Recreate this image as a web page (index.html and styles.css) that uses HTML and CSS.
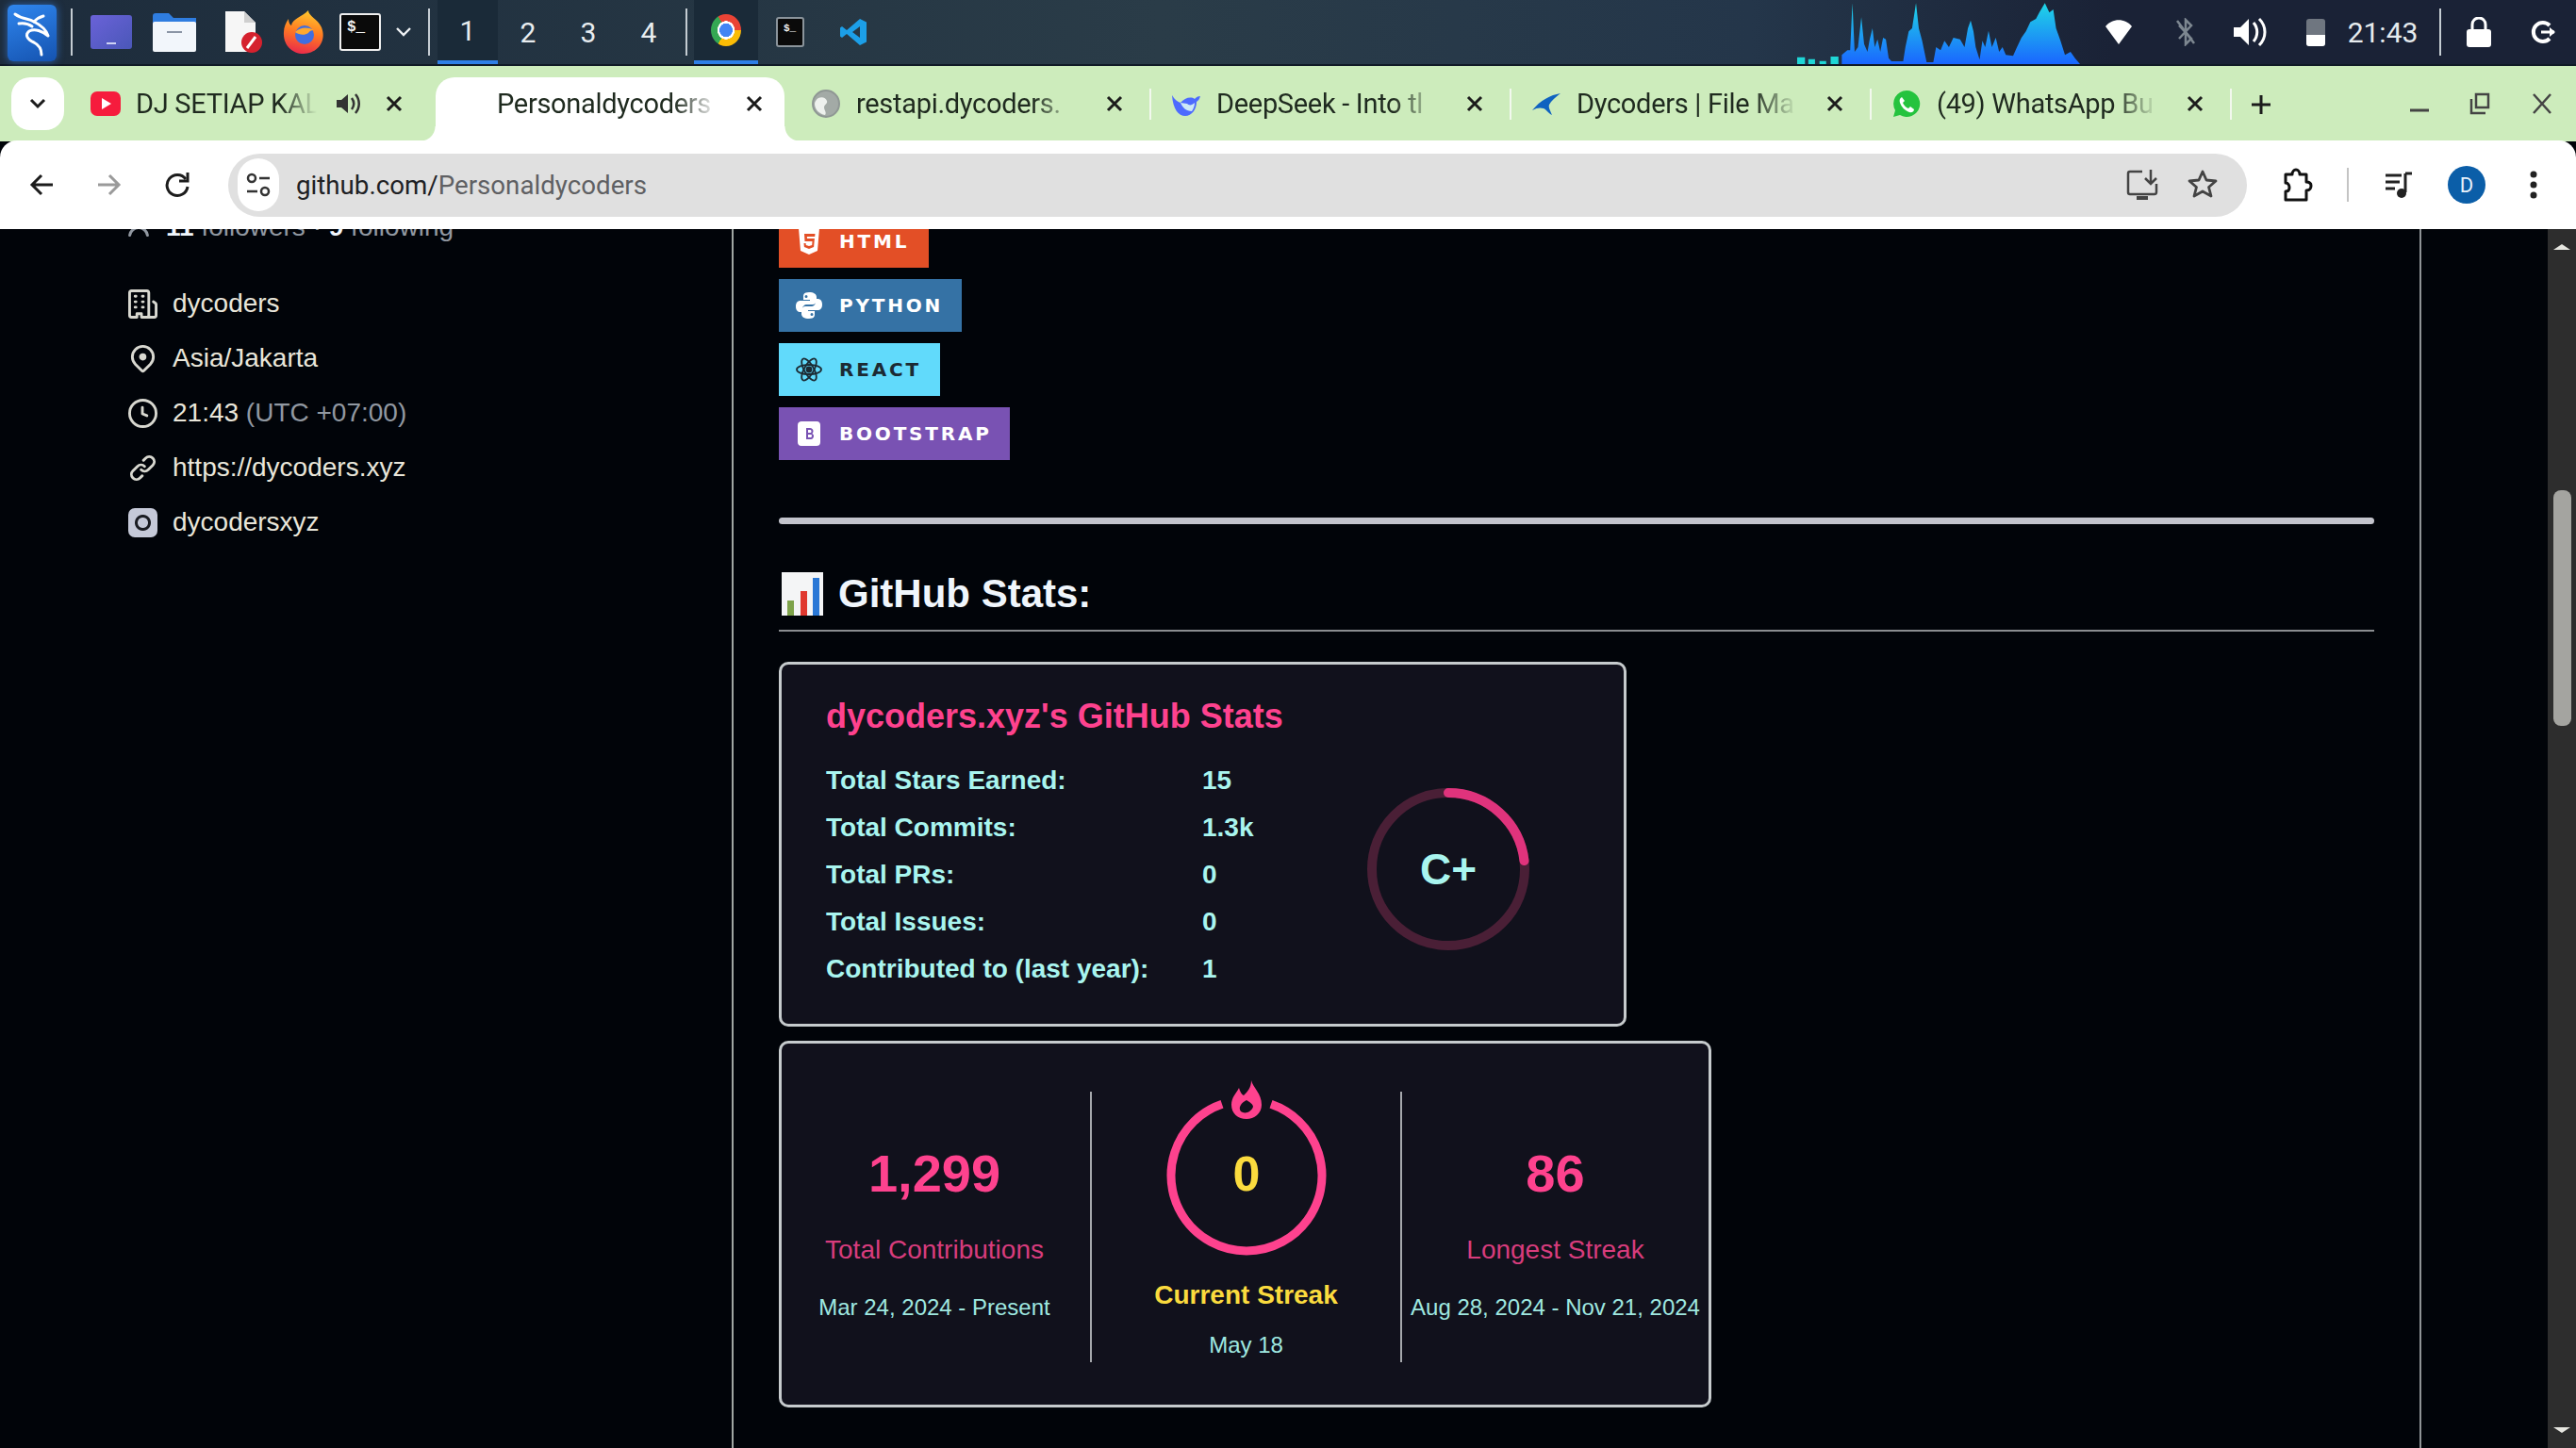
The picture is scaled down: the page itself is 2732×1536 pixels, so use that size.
FILE: index.html

```html
<!DOCTYPE html>
<html lang="en">
<head>
  <meta charset="UTF-8">
  <title>Personaldycoders</title>
  <link rel="stylesheet" href="styles.css">
</head>
<body>
  <header class="taskbar">
    <div class="tb-left">
      <div class="tb-cell kali">
        <svg width="52" height="56" viewBox="0 0 52 56" fill="none" stroke="#fff" stroke-width="3" stroke-linecap="round" stroke-linejoin="round"><path d="M8 8c8 6 14 4 20 8 6 3 13 8 15 15-6-5-14-8-20-5-5 4-2 9 5 12 6 3 8 8 8 13"/><path d="M12 18c6-1 10 0 14 3M28 16c3-3 6-5 10-6"/></svg>
      </div>
      <div class="tb-cell"><span class="tb-sep"></span></div>
      <div class="tb-cell">
        <svg width="44" height="36" viewBox="0 0 44 36"><defs><linearGradient id="desk" x1="0" y1="0" x2="1" y2="1"><stop offset="0" stop-color="#6a62d8"/><stop offset="1" stop-color="#4a57b8"/></linearGradient></defs><rect width="44" height="36" rx="3" fill="url(#desk)"/><rect x="17" y="29" width="10" height="2" fill="#cfd4f5"/></svg>
      </div>
      <div class="tb-cell">
        <svg width="46" height="42" viewBox="0 0 46 42"><path d="M0 4a3 3 0 0 1 3-3h14l5 5h24v8H0z" fill="#2f7de0"/><rect y="10" width="46" height="32" rx="2" fill="#f2f6fb"/><rect x="15" y="20" width="16" height="2" fill="#8b95a5"/></svg>
      </div>
      <div class="tb-cell">
        <svg width="42" height="46" viewBox="0 0 42 46"><path d="M2 1h20l12 12v31H2z" fill="#f6f6f6"/><path d="M22 1l12 12H22z" fill="#cfcfcf"/><circle cx="30" cy="34" r="11" fill="#d5212e"/><path d="M25 40l9-12" stroke="#fff" stroke-width="3"/></svg>
      </div>
      <div class="tb-cell">
        <svg width="44" height="46" viewBox="0 0 44 46"><defs><linearGradient id="fox" x1="0.6" y1="0" x2="0.4" y2="1"><stop offset="0" stop-color="#ffc82c"/><stop offset="0.5" stop-color="#ff7a22"/><stop offset="1" stop-color="#ea2a4a"/></linearGradient></defs><path d="M27 0c0 6 10 9 14 18 6 15-5 28-19 28C9 46 0 36 1 23c0-5 2-10 5-14 0 3 1 6 3 7 1-7 11-9 18-16z" fill="url(#fox)"/><circle cx="23" cy="26" r="10" fill="#3f6ee0"/><path d="M13 23c5-5 13-6 20-2-3 0-5 1-6 3-4 3-10 2-14-1z" fill="#ffa82e"/></svg>
      </div>
      <div class="tb-cell">
        <div class="term term-big">$_</div>
      </div>
      <div class="tb-cell">
        <svg width="18" height="12" viewBox="0 0 18 12" fill="none" stroke="#eef1f4" stroke-width="2.4"><path d="M2 2l7 7 7-7"/></svg>
      </div>
      <div class="tb-cell"><span class="tb-sep"></span></div>
      <div class="tb-cell ws active">1</div>
      <div class="tb-cell ws">2</div>
      <div class="tb-cell ws">3</div>
      <div class="tb-cell ws">4</div>
      <div class="tb-cell"><span class="tb-sep"></span></div>
      <div class="tb-cell ws active"><span class="chrome-logo"></span></div>
      <div class="tb-cell">
        <div class="term term-small">$_</div>
      </div>
      <div class="tb-cell">
        <svg width="30" height="30" viewBox="0 0 30 30"><path d="M22 1l7 3.4v21.2L22 29 8 17l-5 4-2-1.500V10.500L3 9l5 4zM22 9l-8 6 8 6z" fill="#1c9fe8"/></svg>
      </div>
    </div>
    <div class="tb-right">
      <div class="tb-graph">
        <svg width="300" height="68" viewBox="178 0 507 204" preserveAspectRatio="none">
          <defs><linearGradient id="net" x1="0" y1="0" x2="0" y2="1"><stop offset="0" stop-color="#1fd6e6"/><stop offset="1" stop-color="#1a66ff"/></linearGradient></defs>
          <path fill="#1fd6d6" d="M178 182h14v22h-14zM198 188h12v16h-12zM218 194h12v10h-12zM238 180h14v24h-14z"/>
          <polygon fill="url(#net)" points="258,204 258,175 268,160 273,160 277,10 281,165 287,150 293,55 298,140 304,165 308,125 313,90 317,150 322,125 327,165 332,120 337,125 342,185 347,195 368,195 372,150 378,100 384,90 391,10 396,90 402,130 410,198 422,198 427,150 435,160 442,130 450,150 458,120 470,125 478,150 484,90 489,65 494,100 498,150 505,190 510,130 515,150 521,98 527,150 534,120 540,165 546,150 552,175 565,178 572,150 580,120 588,100 596,70 606,60 612,40 622,10 630,40 637,30 642,90 650,130 658,175 668,165 676,185 685,204"/>
        </svg>
      </div>
      <div class="tb-cell">
        <svg width="30" height="28" viewBox="0 0 30 28"><path d="M15 27L1 8c7-9 21-9 28 0z" fill="#fff"/></svg>
      </div>
      <div class="tb-cell">
        <svg width="24" height="30" viewBox="0 0 24 30" fill="none" stroke="#7d8790" stroke-width="2.500"><path d="M5 8l13 14-6 6V2l6 6L5 22"/><path d="M3 3l18 24"/></svg>
      </div>
      <div class="tb-cell">
        <svg width="36" height="32" viewBox="0 0 36 32"><path d="M1 11h7l9-9v28l-9-9H1z" fill="#fff"/><path d="M22 6c5 6 5 14 0 20M28 2c8 8 8 20 0 28" stroke="#fff" stroke-width="3" fill="none"/></svg>
      </div>
      <div class="tb-cell">
        <svg width="20" height="30" viewBox="0 0 20 30"><rect y="1" width="20" height="29" rx="3" fill="#6f7680"/><path d="M0 18h20v9a3 3 0 0 1-3 3H3a3 3 0 0 1-3-3z" fill="#fff"/></svg>
      </div>
      <div class="tb-cell tb-clock">21:43</div>
      <div class="tb-cell"><span class="tb-sep"></span></div>
      <div class="tb-cell">
        <svg width="26" height="32" viewBox="0 0 26 32"><path d="M6 14V8a7 7 0 0 1 14 0v6" fill="none" stroke="#fff" stroke-width="3"/><rect y="13" width="26" height="19" rx="3" fill="#fff"/></svg>
      </div>
      <div></div>
      <div class="tb-cell">
        <svg width="28" height="26" viewBox="0 0 28 26" fill="none" stroke="#fff" stroke-width="4"><path d="M20 6a10 10 0 1 0 0 14"/><path d="M11 13h14" stroke-width="3"/><path d="M20 8l6 5-6 5z" fill="#fff" stroke="none"/></svg>
      </div>
    </div>
  </header>

  <div class="tabstrip">
    <button class="tab-search">
      <svg width="18" height="12" viewBox="0 0 18 12" fill="none" stroke="#1c1c1c" stroke-width="3"><path d="M2 2l7 7 7-7"/></svg>
    </button>

    <div class="tab">
      <svg class="favicon" viewBox="0 0 32 32"><rect y="3" width="32" height="26" rx="7" fill="#f61c3d"/><path d="M12 10l10 6-10 6z" fill="#fff"/></svg>
      <span class="tab-title short">DJ SETIAP KAL</span>
      <svg class="tab-audio" width="26" height="26" viewBox="0 0 26 26"><path d="M1 9h5l7-6v20l-7-6H1z" fill="#333"/><path d="M17 7c3 4 3 8 0 12M21 3c5 6 5 14 0 20" stroke="#333" stroke-width="2.500" fill="none"/></svg>
      <svg class="tab-close" width="18" height="18" viewBox="0 0 18 18"><path d="M2 2l14 14M16 2L2 16"/></svg>
    </div>

    <div class="tab active">
      <span class="tab-title">Personaldycoders</span>
      <svg class="tab-close" width="18" height="18" viewBox="0 0 18 18"><path d="M2 2l14 14M16 2L2 16"/></svg>
    </div>

    <div class="tab sep">
      <svg class="favicon" viewBox="0 0 32 32"><circle cx="16" cy="16" r="14" fill="#a3aaa6" stroke="#8f9794" stroke-width="2"/><path d="M8 10c4-2 8 0 9 3s-3 4-3 7 3 5 1 8c-6-1-11-6-11-12 0-2 2-5 4-6z" fill="#eef1ee"/></svg>
      <span class="tab-title">restapi.dycoders.</span>
      <svg class="tab-close" width="18" height="18" viewBox="0 0 18 18"><path d="M2 2l14 14M16 2L2 16"/></svg>
    </div>

    <div class="tab sep">
      <svg class="favicon" viewBox="0 0 32 32"><path d="M1 7c3 5 6 7 9 8 4-5 11-7 15-4 2-2 4-3 6-3-1 3-2 5-4 6 0 8-5 15-12 15S2 22 1 7z" fill="#4d6bfe"/><path d="M10 15c2 5 6 9 12 9 2-3 3-6 3-9-3 3-6 3-8 1-2 0-5-1-7-1z" fill="#cde9f6"/></svg>
      <span class="tab-title">DeepSeek - Into tl</span>
      <svg class="tab-close" width="18" height="18" viewBox="0 0 18 18"><path d="M2 2l14 14M16 2L2 16"/></svg>
    </div>

    <div class="tab sep">
      <svg class="favicon" viewBox="0 0 32 32"><path d="M31 5C20 7 10 12 1 23c5-3 9-3 12-2 3 1 5 5 9 7-2-5-4-8-3-11 2-4 7-8 12-12z" fill="#0f62c0"/></svg>
      <span class="tab-title">Dycoders | File Ma</span>
      <svg class="tab-close" width="18" height="18" viewBox="0 0 18 18"><path d="M2 2l14 14M16 2L2 16"/></svg>
    </div>

    <div class="tab sep">
      <svg class="favicon" viewBox="0 0 32 32"><path d="M16 2a14 14 0 0 0-12 21L2 30l7-2A14 14 0 1 0 16 2z" fill="#25c33e"/><path d="M11 9c-2 1-3 3-2 6 2 5 5 8 10 10 3 1 5-1 5-3l-4-3-2 2c-3-1-5-4-6-6l2-2z" fill="#fff"/></svg>
      <span class="tab-title">(49) WhatsApp Bu</span>
      <svg class="tab-close" width="18" height="18" viewBox="0 0 18 18"><path d="M2 2l14 14M16 2L2 16"/></svg>
    </div>

    <div class="tab-new">
      <svg width="22" height="22" viewBox="0 0 22 22"><path d="M11 1v20M1 11h20" stroke="#1c1c1c" stroke-width="3"/></svg>
    </div>

    <div class="win-controls">
      <div class="win-btn"><svg width="20" height="20" viewBox="0 0 20 20"><path d="M0 17h20" stroke="#444" stroke-width="3"/></svg></div>
      <div class="win-btn"><svg width="22" height="24" viewBox="0 0 22 24" fill="none" stroke="#444" stroke-width="2.500"><path d="M7 2h13v14H7zM2 7v15h15"/></svg></div>
      <div class="win-btn win-close"><svg width="22" height="24" viewBox="0 0 22 24"><path d="M2 2l18 20M20 2L2 22" stroke="#444" stroke-width="2.500"/></svg></div>
    </div>
  </div>

  <nav class="toolbar">
    <div class="tool">
      <svg width="26" height="24" viewBox="0 0 26 24" fill="none" stroke="#1c1c1c" stroke-width="3"><path d="M25 12H3M13 2L3 12l10 10"/></svg>
    </div>
    <div class="tool">
      <svg width="26" height="24" viewBox="0 0 26 24" fill="none" stroke="#9a9a9a" stroke-width="3"><path d="M1 12h22M13 2l10 10-10 10"/></svg>
    </div>
    <div class="tool">
      <svg width="26" height="28" viewBox="0 0 26 28" fill="none" stroke="#1c1c1c" stroke-width="3"><path d="M22 8a11 11 0 1 0 2 8"/><path d="M24 1v9h-9" stroke-width="3"/></svg>
    </div>

    <div class="omnibox">
      <div class="site-info">
        <svg width="26" height="28" viewBox="0 0 26 28" fill="none" stroke="#333" stroke-width="2.500"><circle cx="6" cy="7" r="4"/><path d="M14 7h11M1 21h11"/><circle cx="20" cy="21" r="4"/></svg>
      </div>
      <div class="url"><span class="url-host">github.com/</span>Personaldycoders</div>
      <div class="omni-actions">
        <div class="omni-btn">
          <svg width="34" height="34" viewBox="0 0 34 34" fill="none" stroke="#444" stroke-width="2.500"><path d="M17 3H4a2 2 0 0 0-2 2v20a2 2 0 0 0 2 2h26a2 2 0 0 0 2-2v-9"/><path d="M26 1v14M20 10l6 6 6-6"/><path d="M11 31h12" stroke-width="4"/></svg>
        </div>
        <div class="omni-btn">
          <svg width="32" height="32" viewBox="0 0 32 32" fill="none" stroke="#444" stroke-width="2.800" stroke-linejoin="round"><path d="M16 3l4 9 10 1-7.500 6.500L25 29l-9-5-9 5 2.500-9.500L2 13l10-1z"/></svg>
        </div>
      </div>
    </div>

    <div class="tool-right">
      <div class="tool">
        <svg width="34" height="36" viewBox="0 0 34 36" fill="none" stroke="#111" stroke-width="3" stroke-linejoin="round"><path d="M5 7h7c0-3 2-5 4-5s4 2 4 5h7v8c4 0 5 2 5 4s-1 5-5 5v10H5V25c3 0 4-2 4-4s-1-5-4-5z"/></svg>
      </div>
      <div class="tool tool-sep"><span></span></div>
      <div class="tool">
        <svg width="30" height="30" viewBox="0 0 30 30"><path d="M1 5h17M1 12h15M1 19h10" stroke="#222" stroke-width="3"/><path d="M22 3v20" stroke="#222" stroke-width="3"/><path d="M22 3h7" stroke="#222" stroke-width="3"/><circle cx="18" cy="24" r="5" fill="#222"/></svg>
      </div>
      <div class="tool"><span class="avatar">D</span></div>
      <div class="tool tool-last">
        <svg width="8" height="30" viewBox="0 0 8 30" fill="#222"><circle cx="4" cy="4" r="3.500"/><circle cx="4" cy="15" r="3.500"/><circle cx="4" cy="26" r="3.500"/></svg>
      </div>
    </div>
  </nav>

  <div class="page">
    <aside class="sidebar">
      <div class="follow-row">
        <svg class="people" width="32" height="32" viewBox="0 0 16 16" fill="#9198a1"><path d="M2 5.500a3.500 3.500 0 1 1 5.898 2.549 5.508 5.508 0 0 1 3.034 4.084.75.75 0 1 1-1.482.235 4 4 0 0 0-7.900 0 .75.750 0 0 1-1.482-.236A5.507 5.507 0 0 1 3.102 8.050 3.493 3.493 0 0 1 2 5.500Z"/></svg>
        <span><b>11</b> followers · <b>9</b> following</span>
      </div>
      <ul class="profile-list">
        <li>
          <svg viewBox="0 0 16 16"><path d="M1.750 16A1.750 1.750 0 0 1 0 14.250V1.750C0 .784.784 0 1.750 0h8.500C11.216 0 12 .784 12 1.750v12.500c0 .085-.006.168-.018.250h2.268a.25.25 0 0 0 .25-.25V8.285a.25.25 0 0 0-.111-.208l-1.055-.703a.749.749 0 1 1 .832-1.248l1.055.703c.487.325.779.871.779 1.456v5.965A1.750 1.750 0 0 1 14.250 16h-3.500a.766.766 0 0 1-.197-.026c-.099.017-.2.026-.303.026h-3a.75.75 0 0 1-.75-.75V14h-1v1.250a.75.75 0 0 1-.75.75Zm-.25-1.750c0 .138.112.25.25.25H4v-1.250a.75.75 0 0 1 .75-.75h2.500a.75.75 0 0 1 .75.75v1.250h2.250a.25.25 0 0 0 .25-.25V1.750a.25.25 0 0 0-.25-.25h-8.500a.25.25 0 0 0-.25.25ZM3.750 6h.5a.75.75 0 0 1 0 1.500h-.5a.75.75 0 0 1 0-1.500ZM3 3.750A.75.75 0 0 1 3.750 3h.5a.75.75 0 0 1 0 1.500h-.5A.75.75 0 0 1 3 3.750Zm4 3A.75.75 0 0 1 7.750 6h.5a.75.75 0 0 1 0 1.500h-.5A.75.75 0 0 1 7 6.750ZM7.750 3h.5a.75.75 0 0 1 0 1.500h-.5a.75.75 0 0 1 0-1.500ZM3 9.750A.75.75 0 0 1 3.750 9h.5a.75.75 0 0 1 0 1.500h-.5A.75.75 0 0 1 3 9.750ZM7.750 9h.5a.75.75 0 0 1 0 1.500h-.5a.75.75 0 0 1 0-1.500Z"/></svg>
          dycoders
        </li>
        <li>
          <svg viewBox="0 0 16 16"><path d="m12.596 11.596-3.535 3.536a1.500 1.500 0 0 1-2.122 0l-3.535-3.536a6.500 6.500 0 1 1 9.192-9.193 6.500 6.500 0 0 1 0 9.193Zm-1.060-8.132v-.001a5 5 0 1 0-7.072 7.072L8 14.070l3.536-3.534a5 5 0 0 0 0-7.072ZM8 9a2 2 0 1 1-.001-3.999A2 2 0 0 1 8 9Z"/></svg>
          Asia/Jakarta
        </li>
        <li>
          <svg viewBox="0 0 16 16"><path d="M8 0a8 8 0 1 1 0 16A8 8 0 0 1 8 0ZM1.500 8a6.500 6.500 0 1 0 13 0 6.500 6.500 0 0 0-13 0Zm7-3.250v2.992l2.028.812a.75.75 0 0 1-.557 1.392l-2.500-1A.751.751 0 0 1 7 8.250v-3.500a.75.75 0 0 1 1.500 0Z"/></svg>
          <span>21:43 <span class="muted">(UTC +07:00)</span></span>
        </li>
        <li>
          <svg viewBox="0 0 16 16"><path d="m7.775 3.275 1.250-1.250a3.500 3.500 0 1 1 4.950 4.950l-2.500 2.500a3.500 3.500 0 0 1-4.950 0 .751.751 0 0 1 .018-1.042.751.751 0 0 1 1.042-.018 1.998 1.998 0 0 0 2.830 0l2.500-2.500a2.002 2.002 0 0 0-2.830-2.830l-1.250 1.250a.751.751 0 0 1-1.042-.018.751.751 0 0 1-.018-1.042Zm-4.690 9.640a1.998 1.998 0 0 0 2.830 0l1.250-1.250a.751.751 0 0 1 1.042.018.751.751 0 0 1 .018 1.042l-1.250 1.250a3.500 3.500 0 1 1-4.950-4.950l2.500-2.500a3.500 3.500 0 0 1 4.950 0 .751.751 0 0 1-.018 1.042.751.751 0 0 1-1.042.018 1.998 1.998 0 0 0-2.830 0l-2.500 2.500a1.998 1.998 0 0 0 0 2.830Z"/></svg>
          https://dycoders.xyz
        </li>
        <li>
          <span class="insta"></span>
          dycodersxyz
        </li>
      </ul>
    </aside>

    <main class="readme">
      <div class="badges">
        <div class="badge badge-html">
          <svg width="28" height="28" viewBox="-3 0 28 28" fill="#fff"><path fill-rule="evenodd" d="M0 0h22l-2 24-9 4-9-4zM6 6l.5 8h8l-.3 4-3.200 1-3.200-1-.2-2H5.500l.4 4 5.100 2 5.100-2 .8-9H9l-.2-2h8.400l.3-3z"/></svg>
          HTML
        </div>
        <div class="badge badge-python">
          <svg width="28" height="28" viewBox="0 0 28 28" fill="#fff"><path d="M14 0C8 0 8 3 8 5v3h7v1H5C2 9 0 11 0 15s2 6 5 6h2v-3c0-3 2-5 5-5h6c2 0 4-2 4-4V5c0-3-3-5-8-5zm-3 3a1.500 1.500 0 1 1 0 3 1.500 1.500 0 0 1 0-3z"/><path d="M14 28c6 0 6-3 6-5v-3h-7v-1h10c3 0 5-2 5-6s-2-6-5-6h-2v3c0 3-2 5-5 5h-6c-2 0-4 2-4 4v4c0 3 3 5 8 5zm3-3a1.500 1.500 0 1 1 0-3 1.500 1.500 0 0 1 0 3z"/></svg>
          PYTHON
        </div>
        <div class="badge badge-react">
          <svg width="28" height="28" viewBox="0 0 28 28" fill="none" stroke="#1c2a33" stroke-width="1.800"><ellipse cx="14" cy="14" rx="13" ry="5"/><ellipse cx="14" cy="14" rx="13" ry="5" transform="rotate(60 14 14)"/><ellipse cx="14" cy="14" rx="13" ry="5" transform="rotate(120 14 14)"/><circle cx="14" cy="14" r="2.500" fill="#1c2a33"/></svg>
          REACT
        </div>
        <div class="badge badge-bootstrap">
          <svg width="28" height="28" viewBox="0 0 28 28"><path fill="#fff" fill-rule="evenodd" d="M6 1h16c3 0 4 2 4 4v18c0 3-2 4-4 4H6c-3 0-4-2-4-4V5c0-3 2-4 4-4zm5 7v12h5c2 0 3-2 3-3.500S18 14 17 14c1 0 1.500-1.500 1.500-3S17 8 15 8zm2 2h2c1 0 1.500.5 1.500 1.500S16 13 15 13h-2zm0 5h3c1 0 1 1 1 1.500S16.500 18 16 18h-3z"/></svg>
          BOOTSTRAP
        </div>
      </div>

      <hr class="rule">

      <h2 class="stats-heading">
        <svg width="44" height="46" viewBox="0 0 44 46"><rect width="44" height="46" fill="#f4f5f6"/><rect x="6" y="30" width="7" height="16" fill="#7ea34a"/><rect x="20" y="20" width="7" height="26" fill="#e0382f"/><rect x="33" y="6" width="7" height="40" fill="#2a78d6"/></svg>
        GitHub Stats:
      </h2>

      <section class="card stats-card">
        <h3 class="card-title">dycoders.xyz's GitHub Stats</h3>
        <div class="stats-body">
          <dl class="stats-list">
            <div class="stat-row"><dt>Total Stars Earned:</dt><dd>15</dd></div>
            <div class="stat-row"><dt>Total Commits:</dt><dd>1.3k</dd></div>
            <div class="stat-row"><dt>Total PRs:</dt><dd>0</dd></div>
            <div class="stat-row"><dt>Total Issues:</dt><dd>0</dd></div>
            <div class="stat-row"><dt>Contributed to (last year):</dt><dd>1</dd></div>
          </dl>
          <svg class="rank" width="172" height="172" viewBox="0 0 172 172">
            <circle class="rank-track" cx="86" cy="86" r="81"/>
            <circle class="rank-fill" cx="86" cy="86" r="81" stroke-dasharray="118 509" transform="rotate(-90 86 86)"/>
            <text class="rank-text" x="86" y="102" text-anchor="middle">C+</text>
          </svg>
        </div>
      </section>

      <section class="card streak-card">
        <div class="streak-col">
          <div class="streak-num">1,299</div>
          <div class="streak-label">Total Contributions</div>
          <div class="streak-date">Mar 24, 2024 - Present</div>
        </div>
        <div class="streak-col divided">
          <svg class="streak-ring" width="190" height="190" viewBox="0 0 190 190">
            <path class="ring-arc" d="M121 25.300A80 80 0 1 1 69 25.300"/>
            <path class="ring-flame" fill-rule="evenodd" d="M100 0c2 8 11 14 11 26 0 9-8 15-16 15-9 0-16-6-16-15 0-8 5-12 8-18 1 4 3 7 5 8 4-4 8-8 8-16zM95 21c-6 3-9 8-6 12 4 3 11 1 13-5 0-3-4-5-7-7z"/>
            <text class="ring-num" x="95" y="117" text-anchor="middle">0</text>
          </svg>
          <div class="streak-current">Current Streak</div>
          <div class="streak-may">May 18</div>
        </div>
        <div class="streak-col divided">
          <div class="streak-num">86</div>
          <div class="streak-label">Longest Streak</div>
          <div class="streak-date">Aug 28, 2024 - Nov 21, 2024</div>
        </div>
      </section>
    </main>

    <div class="gutter"></div>

    <div class="scrollbar">
      <span class="arrow-up"></span>
      <span class="thumb"></span>
      <span class="arrow-down"></span>
    </div>
  </div>
</body>
</html>
```

FILE: styles.css

```css
* { box-sizing: border-box; }

body {
  margin: 0;
  width: 2732px;
  height: 1536px;
  overflow: hidden;
  display: flex;
  flex-direction: column;
  font-family: "Liberation Sans", Arial, sans-serif;
  background: #010409;
}

/* desktop panel */
.taskbar {
  height: 70px;
  flex: none;
  display: flex;
  justify-content: space-between;
  background: linear-gradient(90deg, #1d2c3c 0%, #2a3c48 45%, #24364a 68%, #1a2236 82%, #1a2236 100%);
  border-bottom: 2px solid #101a26;
}
.tb-left {
  display: grid;
  grid-template-columns: 52px 32px 52px 82px 64px 64px 56px 36px 18px 64px 64px 64px 64px 16px 68px 68px 66px;
  padding-left: 8px;
}
.tb-right {
  display: grid;
  grid-template-columns: 300px 82px 60px 76px 64px 78px 44px 38px 16px 68px;
}
.tb-cell {
  display: flex;
  align-items: center;
  justify-content: center;
  height: 68px;
}
.kali {
  height: 60px;
  margin-top: 5px;
  border-radius: 6px;
  background: linear-gradient(160deg, #2f86ee, #1553b0);
  box-shadow: 0 0 8px rgba(60, 140, 255, .6);
}
.tb-sep {
  width: 2px;
  height: 50px;
  background: #c4ccd2;
}
.ws {
  color: #e8edf0;
  font: 400 30px Roboto, sans-serif;
}
.ws.active {
  background: #1a2a38;
  border-bottom: 4px solid #2f7fe6;
}
.term {
  background: #0a0a0a;
  color: #f2f2f2;
  font: 700 16px "Liberation Mono", monospace;
  padding: 4px 0 0 6px;
  border-radius: 3px;
}
.term-big {
  width: 44px;
  height: 40px;
  border: 2px solid #eee;
}
.term-small {
  width: 30px;
  height: 32px;
  font-size: 11px;
  border: 2px solid #8b949b;
}
.chrome-logo {
  width: 32px;
  height: 34px;
  border-radius: 50%;
  background:
    radial-gradient(closest-side, #4285f4 0 42%, #fff 44% 56%, transparent 58%),
    conic-gradient(from 330deg, #ea4335 0 120deg, #fbbc05 120deg 240deg, #34a853 240deg 360deg);
}
.tb-graph {
  display: flex;
  align-items: flex-end;
}
.tb-clock {
  color: #e6ebee;
  font: 400 30px Roboto, sans-serif;
}

/* tabs */
.tabstrip {
  height: 80px;
  flex: none;
  display: flex;
  padding-left: 12px;
  background: #cdecbc;
}
.tab-search {
  width: 56px;
  height: 56px;
  margin: 12px 6px 0 0;
  border: 0;
  border-radius: 20px;
  background: #fff;
  display: flex;
  align-items: center;
  justify-content: center;
  padding: 0;
}
.tab {
  position: relative;
  width: 382px;
  height: 68px;
  margin-top: 12px;
  padding: 0 29px 13px 22px;
  display: flex;
  align-items: center;
  color: #1f2a1f;
  font: 400 29px Roboto, sans-serif;
  letter-spacing: -.3px;
}
.tab.sep::after {
  content: "";
  position: absolute;
  right: -1px;
  top: 12px;
  width: 2px;
  height: 33px;
  background: #f2f8ee;
}
.tab.active {
  width: 370px;
  margin: 12px 6px 0;
  padding-left: 65px;
  padding-right: 23px;
  background: #fff;
  border-radius: 20px 20px 0 0;
}
.tab.active::before,
.tab.active::after {
  content: "";
  position: absolute;
  bottom: 0;
  width: 16px;
  height: 16px;
}
.tab.active::before {
  left: -16px;
  background: radial-gradient(circle at 0 0, transparent 15px, #fff 16px);
}
.tab.active::after {
  right: -16px;
  background: radial-gradient(circle at 100% 0, transparent 15px, #fff 16px);
}
.favicon {
  width: 32px;
  height: 32px;
  flex: none;
  margin-right: 16px;
}
.tab-title {
  width: 234px;
  flex: none;
  overflow: hidden;
  white-space: nowrap;
  -webkit-mask-image: linear-gradient(90deg, #000 80%, transparent 100%);
  mask-image: linear-gradient(90deg, #000 80%, transparent 100%);
}
.tab-title.short {
  width: 192px;
}
.tab-audio {
  margin-left: 20px;
}
.tab-close {
  flex: none;
  margin-left: auto;
}
.tab-close path {
  stroke: #1c1c1c;
  stroke-width: 3;
}
.tab-new {
  width: 64px;
  height: 68px;
  margin-top: 12px;
  padding-bottom: 11px;
  display: flex;
  align-items: center;
  justify-content: center;
}
.win-controls {
  margin-left: auto;
  display: flex;
  padding-right: 4px;
}
.win-btn {
  width: 64px;
  height: 80px;
  display: flex;
  align-items: center;
  justify-content: center;
}
.win-close {
  margin-left: 2px;
}

/* address bar */
.toolbar {
  height: 94px;
  flex: none;
  display: flex;
  align-items: center;
  padding-left: 8px;
  background: #fff;
  border-radius: 18px 18px 0 0;
  margin-top: -1px;
  position: relative;
}
.tool {
  width: 72px;
  height: 60px;
  flex: none;
  display: flex;
  align-items: center;
  justify-content: center;
}
.omnibox {
  width: 2141px;
  height: 67px;
  flex: none;
  margin-left: 18px;
  display: flex;
  align-items: center;
  padding: 0 15px 0 10px;
  border-radius: 34px;
  background: #e0e0e0;
}
.site-info {
  width: 44px;
  height: 56px;
  flex: none;
  display: flex;
  align-items: center;
  justify-content: center;
  border-radius: 28px;
  background: #fff;
}
.url {
  margin-left: 18px;
  color: #5f6063;
  font: 400 27.7px Roboto, sans-serif;
}
.url-host {
  color: #202124;
}
.omni-actions {
  margin-left: auto;
  display: flex;
}
.omni-btn {
  width: 64px;
  display: flex;
  justify-content: center;
}
.tool-right {
  display: flex;
  padding-left: 17px;
}
.tool-sep {
  width: 36px;
}
.tool-sep span {
  width: 2px;
  height: 36px;
  background: #c4c4c4;
}
.tool-last {
  width: 70px;
}
.avatar {
  width: 40px;
  height: 40px;
  border-radius: 50%;
  background: #0b5ea8;
  color: #e6f0fa;
  font: 400 22px Roboto, sans-serif;
  display: flex;
  align-items: center;
  justify-content: center;
}

/* github page */
.page {
  flex: 1;
  min-height: 0;
  display: flex;
  overflow: hidden;
}
.sidebar {
  width: 776px;
  flex: none;
  padding-left: 136px;
  color: #e9e6da;
  font-size: 28px;
}
.follow-row {
  height: 40px;
  margin-top: -22px;
  display: flex;
  align-items: center;
  gap: 8px;
  color: #9198a1;
  white-space: pre;
}
.follow-row b {
  color: #f0f6fc;
}
.profile-list {
  list-style: none;
  margin: 32px 0 0;
  padding: 0;
}
.profile-list li {
  height: 58px;
  display: flex;
  align-items: center;
  gap: 16px;
}
.profile-list svg {
  width: 31px;
  height: 31px;
  flex: none;
  fill: #d8d8d0;
}
.muted {
  color: #9198a1;
}
.insta {
  width: 31px;
  height: 31px;
  flex: none;
  border-radius: 7px;
  background: radial-gradient(circle, #c5c9d8 0 5px, #1a1c22 6px 8px, #c5c9d8 9px);
}
.readme {
  width: 1792px;
  flex: none;
  padding: 0 48px;
  border-left: 2px solid #a0a6a2;
  border-right: 2px solid #8f9496;
}
.badges {
  display: flex;
  flex-direction: column;
  align-items: flex-start;
  gap: 12px;
  margin-top: -15px;
}
.badge {
  height: 56px;
  display: flex;
  align-items: center;
  padding-left: 18px;
  gap: 18px;
  color: #fff;
  font: 700 20px "DejaVu Sans", sans-serif;
  letter-spacing: 2.8px;
}
.badge-html { width: 159px; background: #e34f26; }
.badge-python { width: 194px; background: #3572a5; }
.badge-react { width: 171px; background: #61dafb; color: #1c2a33; }
.badge-bootstrap { width: 245px; background: #7952b3; }
.rule {
  height: 7px;
  margin: 61px 0 0;
  border: 0;
  border-radius: 4px;
  background: #c3c4cc;
}
.stats-heading {
  height: 67px;
  margin: 47px 0 32px;
  padding: 0 0 11px 3px;
  display: flex;
  align-items: center;
  gap: 16px;
  color: #f0f6fc;
  font-size: 42px;
  font-weight: 700;
  border-bottom: 2px solid #8a8d90;
}
.card {
  border: 3px solid #c6cbcd;
  border-radius: 10px;
  background: #11111c;
}
.stats-card {
  width: 899px;
  height: 387px;
  padding: 33px 0 0 47px;
}
.card-title {
  margin: 0 0 21px;
  color: #fe428e;
  font-size: 36px;
  line-height: 44px;
  font-weight: 700;
}
.stats-body {
  display: flex;
  align-items: flex-start;
}
.stats-list {
  width: 574px;
  margin: 0;
}
.stat-row {
  height: 50px;
  display: flex;
  align-items: center;
  color: #a9f5ef;
  font-size: 28px;
  font-weight: 700;
}
.stat-row dt {
  width: 399px;
}
.stat-row dd {
  margin: 0;
}
.rank {
  margin-top: 33px;
  flex: none;
}
.rank-track,
.rank-fill {
  fill: none;
  stroke-width: 10;
}
.rank-track {
  stroke: #4a1f36;
}
.rank-fill {
  stroke: #e0337c;
  stroke-linecap: round;
}
.rank-text {
  fill: #a9f5ef;
  font-size: 46px;
  font-weight: 700;
}
.streak-card {
  width: 989px;
  height: 389px;
  margin-top: 15px;
  padding: 51px 0 45px;
  display: grid;
  grid-template-columns: 327px 329px 1fr;
}
.streak-col {
  display: flex;
  flex-direction: column;
  align-items: center;
  white-space: nowrap;
}
.streak-col:first-child {
  padding-right: 3px;
}
.streak-col.divided {
  border-left: 2px solid #a6a8ac;
}
.streak-num {
  margin-top: 52px;
  color: #fe428e;
  font-size: 56px;
  line-height: 70px;
  font-weight: 700;
}
.streak-label {
  margin-top: 26px;
  color: #d83c7c;
  font-size: 28px;
  line-height: 40px;
}
.streak-date {
  margin-top: 23px;
  color: #9fe8e0;
  font-size: 24px;
  line-height: 36px;
}
.streak-ring {
  flex: none;
  margin-top: -12px;
}
.ring-arc {
  fill: none;
  stroke: #fe428e;
  stroke-width: 9;
}
.ring-flame {
  fill: #fe428e;
}
.ring-num {
  fill: #fbdb3e;
  font-size: 52px;
  font-weight: 700;
}
.streak-current {
  margin-top: 18px;
  color: #fbdb3e;
  font-size: 28px;
  line-height: 40px;
  font-weight: 700;
}
.streak-may {
  margin-top: 15px;
  color: #9fe8e0;
  font-size: 24px;
  line-height: 36px;
}
.gutter {
  flex: 1;
}
.scrollbar {
  width: 30px;
  flex: none;
  display: flex;
  flex-direction: column;
  align-items: center;
  background: #2d2d2d;
}
.arrow-up,
.arrow-down {
  width: 0;
  height: 0;
  border-left: 9px solid transparent;
  border-right: 9px solid transparent;
}
.arrow-up {
  margin-top: 16px;
  border-bottom: 6px solid #e6e6e0;
}
.arrow-down {
  margin-top: auto;
  margin-bottom: 16px;
  border-top: 6px solid #e6e6e0;
}
.thumb {
  width: 19px;
  height: 250px;
  margin-top: 255px;
  border-radius: 8px;
  background: #a4a4a0;
}
```
